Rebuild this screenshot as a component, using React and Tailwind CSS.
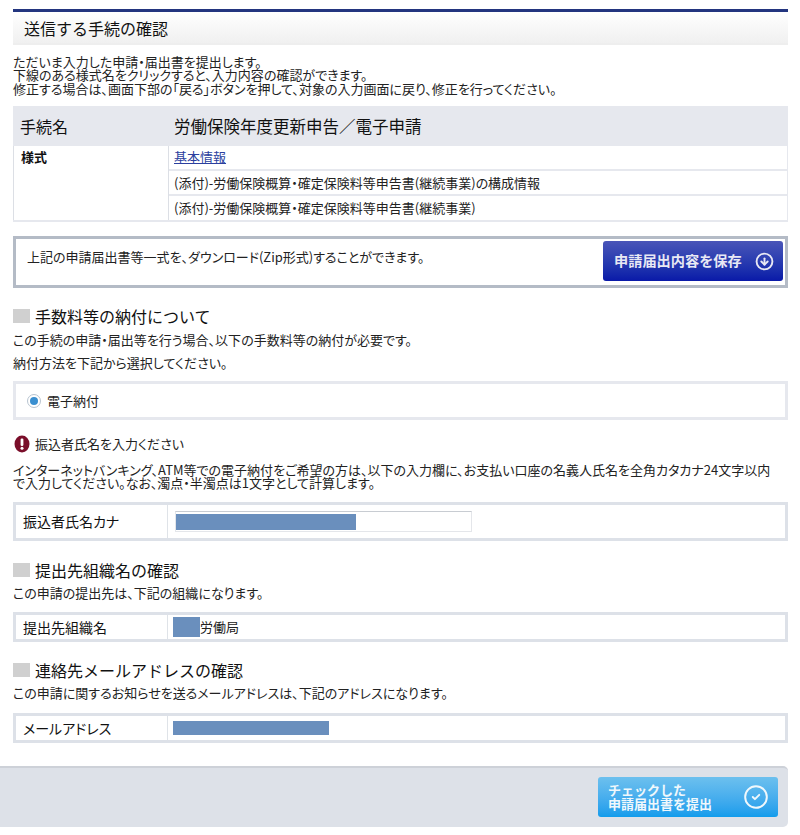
import React from 'react';
import { CircleArrowDown, CircleCheck } from 'lucide-react';

// Section heading with the grey square marker
const SectionTitle = ({ children, className = '' }) => (
  <div className={`flex items-center gap-[5px] ${className}`}>
    <span className="w-[17px] h-[14px] bg-[#d0d0d0]" />
    <h2 className="text-[16px] leading-[20px] text-[#111] [font-feature-settings:normal]">{children}</h2>
  </div>
);

// Framed row with a label on the left
const InfoRow = ({ label, height, children }) => (
  <div className={`flex border-[3px] border-[#dde1e8] ${height}`}>
    <div className="w-[152px] shrink-0 pl-[7px] flex items-center border-r border-[#dfe3e8] text-[14px] text-[#111]">
      {label}
    </div>
    <div className="flex-1 flex items-center pl-[5px]">{children}</div>
  </div>
);

export default function App() {
  return (
    <div className="w-[800px] h-[835px] bg-white overflow-hidden pt-[9px] pl-[13px] pr-[12px] font-['Noto_Sans_CJK_JP','Liberation_Sans',sans-serif] text-[13px] text-[#222] [font-feature-settings:'palt']">
      {/* Page title */}
      <div className="h-[36px] border-t-[3px] border-[#23357f] border-b-2 border-b-[#eeeeee] bg-gradient-to-b from-white to-[#f0f0f0] flex items-center pl-[11px]">
        <h1 className="text-[16px] text-[#111] [font-feature-settings:normal]">送信する手続の確認</h1>
      </div>

      <div className="mt-[10px] leading-[13px]">
        <p>ただいま入力した申請・届出書を提出します。</p>
        <p>下線のある様式名をクリックすると、入力内容の確認ができます。</p>
        <p className="mt-[1px]">修正する場合は、画面下部の「戻る」ボタンを押して、対象の入力画面に戻り、修正を行ってください。</p>
      </div>

      {/* Procedure table */}
      <div className="mt-[11px]">
        <div className="flex h-[40px] bg-[#e6e8ee] text-[#111] items-center [font-feature-settings:normal]">
          <div className="w-[156px] pl-[7px] text-[16px]">手続名</div>
          <div className="pl-[5px] text-[16.5px]">労働保険年度更新申告／電子申請</div>
        </div>
        <div className="flex border-b-2 border-[#e6e8ee]">
          <div className="w-[156px] shrink-0 pl-[7px] pt-[1px] border-l border-r border-[#dcdfe5] font-bold text-[#111]">様式</div>
          <div className="flex-1 border-r border-[#e6e8ee]">
            <div className="h-[25px] flex items-center pl-[5px] pb-[2px] border-b-2 border-[#e6e8ee]">
              <a href="#" className="text-[#2b3f9e] underline">基本情報</a>
            </div>
            <div className="h-[25px] flex items-center pl-[5px] border-b-2 border-[#e6e8ee]">(添付)-労働保険概算・確定保険料等申告書(継続事業)の構成情報</div>
            <div className="h-[24px] flex items-center pl-[5px]">(添付)-労働保険概算・確定保険料等申告書(継続事業)</div>
          </div>
        </div>
      </div>

      {/* Download box */}
      <div className="mt-[14px] h-[52px] border-[3px] border-[#b4bbc6] flex justify-between pl-[11px] pr-[2px] pt-[2px]">
        <p className="mt-[6px]">上記の申請届出書等一式を、ダウンロード(Zip形式)することができます。</p>
        <button className="w-[180px] h-[40px] rounded-[3px] bg-gradient-to-b from-[#4a55b8] to-[#0a18a8] text-[#e8e8f4] text-[14.2px] font-bold flex items-center justify-between pl-[11px] pr-[9px] [font-feature-settings:normal]">
          申請届出内容を保存
          <CircleArrowDown size={19} strokeWidth={2.4} />
        </button>
      </div>

      <SectionTitle className="mt-[18px]">手数料等の納付について</SectionTitle>
      <p className="mt-[6px] leading-[16px]">この手続の申請・届出等を行う場合、以下の手数料等の納付が必要です。</p>
      <p className="mt-[7px] leading-[16px]">納付方法を下記から選択してください。</p>

      {/* Payment method */}
      <div className="mt-[10px] h-[39px] border-[3px] border-[#e6e8ee] flex items-center pl-[11px] gap-[6px]">
        <span className="w-[14px] h-[14px] rounded-full border border-[#b8c4d0] bg-white flex items-center justify-center">
          <span className="w-[8px] h-[8px] rounded-full bg-[#3a8fd0]" />
        </span>
        電子納付
      </div>

      <div className="mt-[14px] flex items-center gap-[4px] h-[20px]">
        <svg width="18" height="18" viewBox="0 0 18 18">
          <ellipse cx="9" cy="9" rx="7.5" ry="8.5" fill="#7a0e2a" />
          <rect x="7.6" y="3.5" width="2.8" height="7.5" rx="1.2" fill="#fff" />
          <circle cx="9" cy="13.3" r="1.5" fill="#fff" />
        </svg>
        <span>振込者氏名を入力ください</span>
      </div>

      <div className="mt-[9px] leading-[13px]">
        <p>インターネットバンキング、ATM等での電子納付をご希望の方は、以下の入力欄に、お支払い口座の名義人氏名を全角カタカナ24文字以内</p>
        <p>で入力してください。なお、濁点・半濁点は1文字として計算します。</p>
      </div>

      <div className="mt-[13px]">
        <InfoRow label="振込者氏名カナ" height="h-[39px]">
          <div className="ml-[2px] w-[297px] h-[21px] border border-[#e4e6ea] border-t-[#c8ccd2] flex items-center">
            <div className="w-[180px] h-[16px] bg-[#6a8fbd]" />
          </div>
        </InfoRow>
      </div>

      <SectionTitle className="mt-[19px]">提出先組織名の確認</SectionTitle>
      <p className="mt-[5px] leading-[16px]">この申請の提出先は、下記の組織になります。</p>

      <div className="mt-[11px]">
        <InfoRow label="提出先組織名" height="h-[30px]">
          <div className="w-[27px] h-[20px] bg-[#6a8fbd]" />
          <span>労働局</span>
        </InfoRow>
      </div>

      <SectionTitle className="mt-[18px]">連絡先メールアドレスの確認</SectionTitle>
      <p className="mt-[5px] leading-[16px]">この申請に関するお知らせを送るメールアドレスは、下記のアドレスになります。</p>

      <div className="mt-[12px]">
        <InfoRow label="メールアドレス" height="h-[30px]">
          <div className="w-[156px] h-[14px] bg-[#6a8fbd]" />
        </InfoRow>
      </div>

      {/* Footer bar */}
      <div className="mt-[23px] -ml-[13px] h-[61px] rounded-r-[5px] bg-[#dde1e8] border-t-2 border-[#cdd1d8] flex justify-end items-start pt-[9px] pr-[10px]">
        <button className="w-[180px] h-[40px] rounded-[3px] bg-gradient-to-b from-[#6cc0ee] to-[#0f9cec] text-[#f0f8fc] text-[13px] font-bold leading-[14px] flex items-center justify-between pl-[10px] pr-[9px] text-left [font-feature-settings:normal]">
          <span>チェックした<br />申請届出書を提出</span>
          <CircleCheck size={26} strokeWidth={1.8} />
        </button>
      </div>
    </div>
  );
}
